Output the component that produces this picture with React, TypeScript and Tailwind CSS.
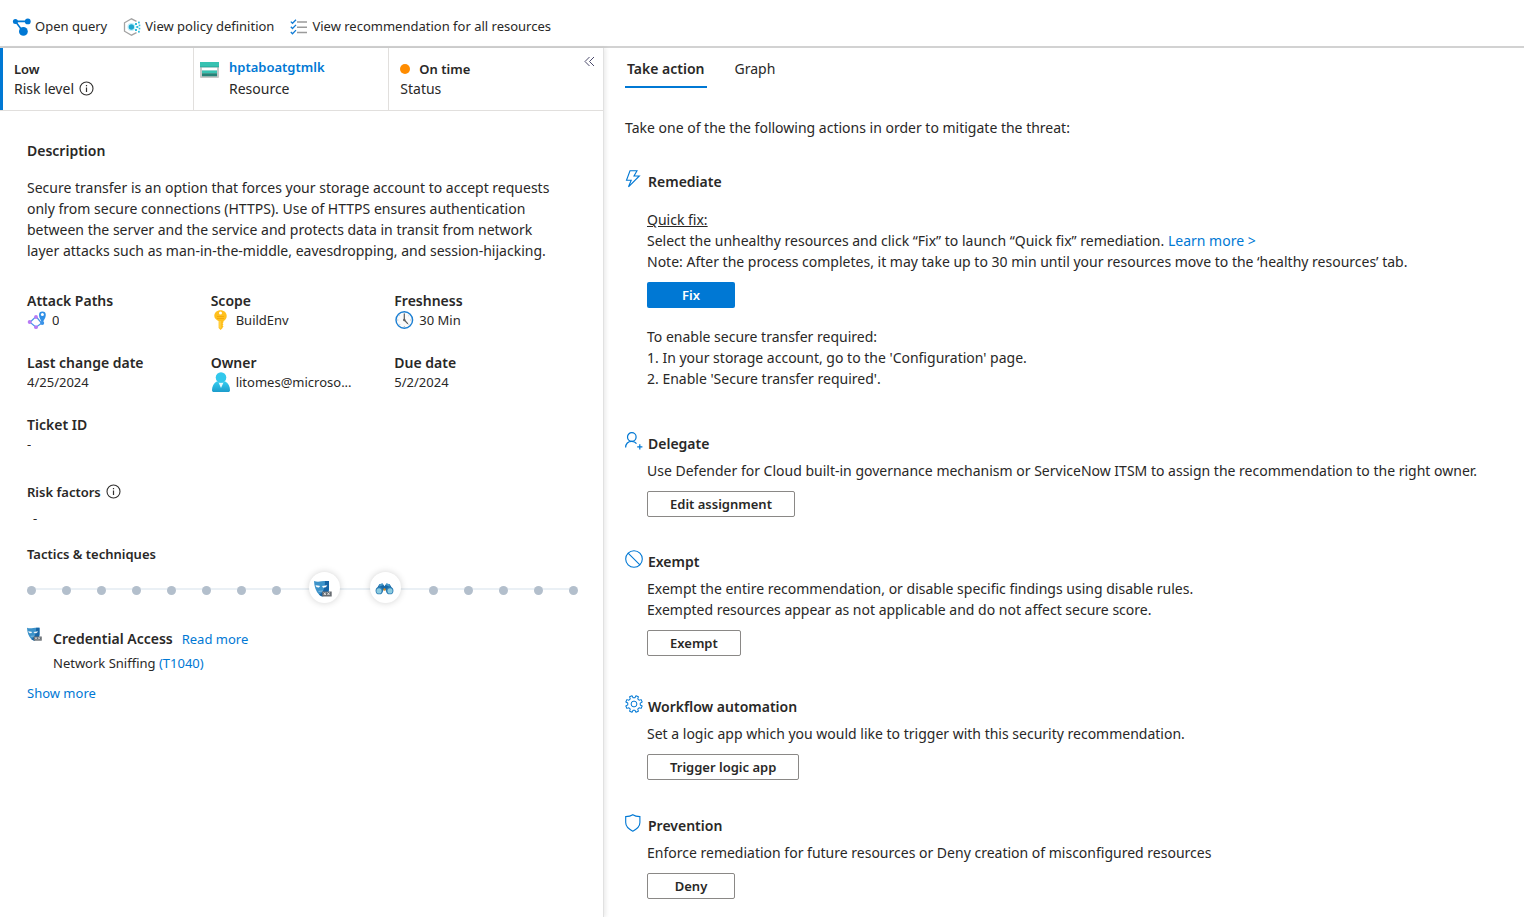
import type { ReactNode } from "react";

function QueryIcon() {
  return (
    <svg width="19" height="18" viewBox="0 0 19 18" aria-hidden="true" className="shrink-0">
      <path d="M3.500 3.400h12M3.500 3.400l7.500 10" stroke="#0078d4" strokeWidth="1.600" fill="none" />
      <circle cx="3.400" cy="3.400" r="2.500" fill="#0078d4" />
      <circle cx="15.800" cy="3.400" r="2.900" fill="#0078d4" />
      <circle cx="11.400" cy="13.400" r="4.400" fill="#0078d4" />
    </svg>
  );
}

function PolicyIcon() {
  return (
    <svg width="18" height="18" viewBox="0 0 18 18" aria-hidden="true" className="shrink-0">
      <path d="M13.500 3.300L8.500.8 1.500 4.800v8.400l7 4 5-2.500" stroke="#a3a3a3" strokeWidth="1.300" fill="none" />
      <circle cx="8.400" cy="9" r="4" fill="#c3f1fb" />
      <circle cx="8.400" cy="9" r="2.700" fill="#1fa8cf" />
      <g fill="#32bedd">
        <rect x="12" y="5" width="2" height="2" />
        <rect x="15" y="3.600" width="1.800" height="1.800" />
        <rect x="13.300" y="8" width="2" height="2" />
        <rect x="15.700" y="6.600" width="1.600" height="1.600" />
        <rect x="15.700" y="9.800" width="1.600" height="1.600" />
        <rect x="12" y="11" width="2" height="2" />
        <rect x="15" y="12.800" width="1.800" height="1.800" />
      </g>
    </svg>
  );
}

function ChecklistIcon() {
  return (
    <svg width="18" height="16" viewBox="0 0 18 16" aria-hidden="true" className="shrink-0">
      <path d="M7 3h10M7 8.200h10M7 13.400h10" stroke="#9b9b9b" strokeWidth="1.500" />
      <path d="M.8 2.600l1.700 1.700L6 .7M.8 7.800l1.700 1.700L6 5.900M.8 13l1.700 1.700L6 11.100" stroke="#0f7bd6" strokeWidth="1.300" fill="none" />
    </svg>
  );
}

function InfoIcon() {
  return (
    <svg width="15" height="15" viewBox="0 0 15 15" aria-hidden="true" className="-mt-[2px] shrink-0">
      <circle cx="7.500" cy="7.500" r="6.500" stroke="#323130" strokeWidth="1.100" fill="none" />
      <path d="M7.500 6.500v4.500M7.500 4v1.300" stroke="#323130" strokeWidth="1.200" />
    </svg>
  );
}

function StorageIcon() {
  return (
    <svg width="19" height="16" viewBox="0 0 19 16" aria-hidden="true" className="mt-[5px] shrink-0">
      <rect y="0" width="19" height="16" rx="1" fill="#c8c8c8" />
      <rect width="19" height="5" fill="#37c2b1" />
      <rect x="2" y="5.500" width="15" height="3" fill="#fff" />
      <rect x="2" y="8.500" width="15" height="2.800" fill="#37c2b1" />
      <rect x="2" y="11.300" width="15" height="3" fill="#258277" />
      <rect y="4.400" width="19" height=".9" fill="#2aa79a" />
    </svg>
  );
}

function AttackPathIcon() {
  return (
    <svg width="20" height="20" viewBox="0 0 20 20" aria-hidden="true" className="shrink-0">
      <path d="M9 6.500L3 12.300l6 5 5.500-4M9 6.500l5.500 6.500" stroke="#4a96e8" strokeWidth="1.200" fill="none" />
      <path d="M15.300 13.500c-1-3-3.300-5.300-3.300-8.500a3.400 3.400 0 016.800 0c0 3.200-2.500 5.500-3.500 8.500z" fill="#2f8fe6" />
      <circle cx="15.400" cy="4.600" r="1.500" fill="#fff" />
      <circle cx="15.200" cy="13" r="2" fill="#3b93e8" />
      <circle cx="9" cy="7" r="1.900" fill="#b77af4" />
      <circle cx="2.700" cy="12" r="2" fill="#b77af4" />
      <circle cx="9" cy="17.200" r="1.900" fill="#b77af4" />
    </svg>
  );
}

function KeyIcon() {
  return (
    <svg width="20" height="20" viewBox="0 0 20 20" aria-hidden="true" className="shrink-0">
      <path fillRule="evenodd" fill="#ffc01e" d="M9.500.2c3.600 0 6.200 2.400 6.200 5.700 0 2.300-1.300 4.100-3.200 5v1.300l-.9 1 .9 1-.9 1.100.9 1.100-.9 1V18l-2 1.900-2-1.900v-7.100C5.700 10 3.300 8.200 3.300 5.900 3.300 2.600 5.900.2 9.500.2zm0 1.300a1.500 1.500 0 100 3 1.500 1.500 0 000-3z" />
      <path fill="#f0a30a" d="M6 6.200h7v.9H6zM6 7.900h7v.8H6z" />
      <path fill="#ffdc5c" d="M8.500 11h1v7.500l-1-.9z" />
    </svg>
  );
}

function PersonIcon() {
  return (
    <svg width="20" height="20" viewBox="0 0 20 20" aria-hidden="true" className="shrink-0">
      <defs>
        <linearGradient id="person" x1="0" y1="0" x2="0" y2="1">
          <stop offset="0" stopColor="#35cdf0" />
          <stop offset="1" stopColor="#1c9ccb" />
        </linearGradient>
      </defs>
      <path fill="url(#person)" d="M5.600 9.500h8.800c2.800 1.500 4.600 5 4.600 8.700 0 1-.7 1.800-1.800 1.800H2.800C1.700 20 1 19.200 1 18.200 1 14.500 2.800 11 5.600 9.500z" />
      <path fill="#e8f9fd" d="M7.500 10.500L10 16l2.500-5.500z" />
      <circle cx="10" cy="5.500" r="5.300" fill="#32c8ec" />
    </svg>
  );
}

function ClockIcon() {
  return (
    <svg width="20" height="20" viewBox="0 0 20 20" aria-hidden="true" className="shrink-0">
      <circle cx="10.300" cy="10" r="8.300" fill="#fafafa" stroke="#1b7fd3" strokeWidth="1.400" />
      <path d="M10.300 3v1M10.300 16v1M3.300 10h1M16.300 10h1M5.300 5l.7.7M14.600 14.300l.7.700M5.300 15l.7-.7M14.600 5.700l.7-.7" stroke="#a8a8a8" strokeWidth=".9" />
      <path d="M10.300 3.800V10l3.600 3.800" stroke="#5c5c5c" strokeWidth="1.200" fill="none" />
      <circle cx="10.300" cy="10" r="1.200" fill="#5c5c5c" />
    </svg>
  );
}

function MaskIcon({ small = false }: { small?: boolean }) {
  return (
    <svg width={small ? 15 : 18} height={small ? 14 : 17} viewBox="0 0 18 16" aria-hidden="true" className="shrink-0">
      <path d="M0 .5c2.500.8 4.500.8 7.500.3 3-.5 5-.5 7.500-.3v8c0 3-2 5.500-5.500 7-1.500.7-3 0-4.500-1.500C2 11 .2 6 0 .5z" fill="#3c92c9" />
      <path d="M15 .5v8c0 3-2 5.500-5.500 7-1.500.7-3 0-4.500-1.500C9 12 11 8 11 .4z" fill="#1764a5" />
      <path d="M1.800 5l4 .6-.8 1.200-2.500-.4zM8.200 5.800l4.600-.9-.9 1.600-2.900.4zM4.500 10.800l4.500-.3" fill="#fff" stroke="#fff" strokeWidth=".4" />
      <rect x="8.200" y="11" width="9.500" height="5" fill="#686d72" />
      <path d="M9.800 12l2 2.500M11.800 12l-2 2.500M13.500 12l2 2.500M15.500 12l-2 2.500" stroke="#eee" strokeWidth=".9" />
    </svg>
  );
}

function BinocularsIcon() {
  return (
    <svg width="19" height="12" viewBox="0 0 20 12" aria-hidden="true" className="shrink-0">
      <path d="M4.500 1L8 .2l2 3 2-3 3.500.8 3.500 6-6 3.500-2-3.500H9l-2 3.500L1 7z" fill="#1768a6" />
      <path d="M4.500 1L8 .2l.6 1.600-4 1.700zM15.500 1L12 .2l-.6 1.600 4 1.700z" fill="#4a9bcb" />
      <circle cx="4.400" cy="7.800" r="3.800" fill="#2a7bb3" />
      <circle cx="15.600" cy="7.800" r="3.800" fill="#2a7bb3" />
      <circle cx="4.200" cy="8" r="2.700" fill="#8ccbe0" />
      <circle cx="15.800" cy="8" r="2.700" fill="#8ccbe0" />
      <circle cx="10" cy="6.600" r="1.300" fill="#d98a1f" />
    </svg>
  );
}

function BoltIcon() {
  return (
    <svg width="16" height="18" viewBox="0 0 16 18" aria-hidden="true" fill="none" stroke="#0078d4" strokeWidth="1.100">
      <path d="M5 .8h7L9 6h5.300L3.500 16.800 6.200 10.200H1.500z" />
    </svg>
  );
}

function DelegateIcon() {
  return (
    <svg width="18" height="18" viewBox="0 0 18 18" aria-hidden="true" fill="none" stroke="#0078d4" strokeWidth="1.200">
      <circle cx="6.800" cy="5" r="4.300" />
      <path d="M.6 15.500C.8 11.600 3.400 9.300 6.800 9.300c2 0 3.700.8 4.700 2.300M14.800 12.200v5.200M12.200 14.800h5.200" />
    </svg>
  );
}

function BlockedIcon() {
  return (
    <svg width="18" height="18" viewBox="0 0 18 18" aria-hidden="true" fill="none" stroke="#0078d4" strokeWidth="1.100">
      <circle cx="9" cy="9" r="8.300" />
      <path d="M3.100 3.100l11.800 11.800" />
    </svg>
  );
}

function GearIcon() {
  const teeth = Array.from({ length: 8 }, (_, i) => {
    const point = (radius: number, degrees: number) => {
      const a = ((degrees + i * 45) * Math.PI) / 180;
      return `${(9 + radius * Math.cos(a)).toFixed(2)} ${(9 + radius * Math.sin(a)).toFixed(2)}`;
    };
    return `${i === 0 ? "M" : "L"}${point(8.4, -9)} L${point(8.4, 9)} L${point(6.3, 14)} L${point(6.3, 31)}`;
  }).join(" ");
  return (
    <svg width="18" height="18" viewBox="0 0 18 18" aria-hidden="true" fill="none" stroke="#0078d4" strokeWidth="1" strokeLinejoin="round">
      <path d={`${teeth}Z`} transform="rotate(22.500 9 9)" />
      <circle cx="9" cy="9" r="2.900" />
    </svg>
  );
}

function ShieldIcon() {
  return (
    <svg width="16" height="18" viewBox="0 0 16 18" aria-hidden="true" fill="none" stroke="#0078d4" strokeWidth="1.100">
      <path d="M7.800.7C6 2 3.500 2.600.7 2.600v6c0 4 3 6.600 7.100 8.600 4.100-2 7.100-4.600 7.100-8.600v-6C12 2.600 9.600 2 7.800.7z" />
    </svg>
  );
}

function ToolbarButton({ icon, children }: { icon: ReactNode; children: ReactNode }) {
  return (
    <button type="button" className="flex items-center gap-1 text-[13px]">
      {icon}
      {children}
    </button>
  );
}

function Field({ label, icon, children }: { label: string; icon?: ReactNode; children: ReactNode }) {
  return (
    <div className="min-w-0">
      <dt className="text-sm/5 font-semibold">{label}</dt>
      <dd className="flex h-5 items-center gap-[5px] text-[13px]">
        {icon && <span className="-mt-[2px] shrink-0">{icon}</span>}
        <span className="truncate">{children}</span>
      </dd>
    </div>
  );
}

function TacticsTimeline() {
  const dots = (count: number) =>
    Array.from({ length: count }, (_, i) => <li key={`${count}-${i}`} className="mt-[6px] size-[9px] rounded-full bg-[#b3bfcc]" />);
  const bubble = (icon: ReactNode) => (
    <li className="mx-[2px] flex size-[31px] items-center justify-center rounded-full bg-white pt-[2px] pr-[3px] shadow-[0_0_7px_rgba(0,0,0,0.18)]">{icon}</li>
  );
  return (
    <div className="relative mt-2">
      <div className="absolute inset-x-1 top-4 h-[2px] bg-[#eaf0f5]" />
      <ul className="relative flex items-center justify-between">
        {dots(8)}
        {bubble(<MaskIcon />)}
        {bubble(<BinocularsIcon />)}
        {dots(5)}
      </ul>
    </div>
  );
}

function ActionButton({ primary = false, children }: { primary?: boolean; children: ReactNode }) {
  return (
    <button
      type="button"
      className={
        primary
          ? "mt-[10px] h-[26px] min-w-[88px] rounded-[2px] bg-[#0078d4] px-[22px] text-[13px] font-semibold text-white"
          : "mt-[10px] h-[26px] min-w-[88px] rounded-[2px] border border-[#8a8886] bg-white px-[22px] text-[13px] font-semibold"
      }
    >
      {children}
    </button>
  );
}

function Action({ title, icon, children }: { title: string; icon: ReactNode; children: ReactNode }) {
  return (
    <section className="text-sm/[21px]">
      <h2 className="flex font-semibold">
        <span className="-mt-[6px] flex w-[23px] shrink-0 items-center">{icon}</span>
        {title}
      </h2>
      <div className="ml-[22px]">{children}</div>
    </section>
  );
}

export default function App() {
  return (
    <div className="flex min-h-screen flex-col bg-white font-['Segoe_UI','Noto_Sans','Open_Sans',sans-serif] text-[#292827]">
      <header className="flex h-12 items-center gap-4 border-b-2 border-[#d2d2d2] px-3 pt-2">
        <ToolbarButton icon={<QueryIcon />}>Open query</ToolbarButton>
        <ToolbarButton icon={<PolicyIcon />}>View policy definition</ToolbarButton>
        <ToolbarButton icon={<ChecklistIcon />}>View recommendation for all resources</ToolbarButton>
      </header>

      <div className="grid grow grid-cols-[minmax(0,604fr)_minmax(0,920fr)]">
        <aside className="border-r border-[#e1e1e1] shadow-[2px_0_4px_rgba(0,0,0,0.08)]">
          <div className="flex h-[63px] border-b border-[#e1dfdd] text-sm/5">
            <div className="w-[32%] border-l-[3px] border-[#0078d4] pt-[11px] pl-[11px]">
              <p className="text-[13px]/5 font-semibold">Low</p>
              <p className="flex items-center gap-[5px]">
                Risk level <InfoIcon />
              </p>
            </div>
            <div className="flex w-[32.400%] gap-[10px] border-l border-[#e1dfdd] pt-[9px] pl-[6px]">
              <StorageIcon />
              <div>
                <a href="#resource" className="block text-[13px]/5 font-semibold text-[#0078d4]">
                  hptaboatgtmlk
                </a>
                <p className="mt-[2px]">Resource</p>
              </div>
            </div>
            <div className="grow border-l border-[#e1dfdd] pt-[11px] pl-[11px]">
              <p className="flex items-center gap-[9px] text-[13px]/5 font-semibold">
                <span className="size-[10px] rounded-full bg-[#ff8c00]" />
                On time
              </p>
              <p>Status</p>
            </div>
            <button type="button" aria-label="Collapse panel" className="mr-2 h-[26px] pl-2">
              <svg width="11" height="11" viewBox="0 0 11 11" aria-hidden="true" fill="none" stroke="#4b4a6b">
                <path d="M5.500 1L1 5.500 5.500 10M10 1L5.500 5.500 10 10" />
              </svg>
            </button>
          </div>

          <div className="pt-[30px] pr-[25px] pl-[27px]">
            <h2 className="text-sm/5 font-semibold">Description</h2>
            <p className="mt-4 pr-3 text-sm/[21px]">
              Secure transfer is an option that forces your storage account to accept requests only from secure connections (HTTPS). Use of HTTPS ensures authentication between the server and the service and protects data in transit from network layer attacks such as man-in-the-middle, eavesdropping, and session-hijacking.
            </p>

            <dl className="mt-[30px] grid grid-cols-3 gap-y-[22px]">
              <Field label="Attack Paths" icon={<AttackPathIcon />}>0</Field>
              <Field label="Scope" icon={<KeyIcon />}>BuildEnv</Field>
              <Field label="Freshness" icon={<ClockIcon />}>30 Min</Field>
              <Field label="Last change date">4/25/2024</Field>
              <Field label="Owner" icon={<PersonIcon />}>litomes@microso...</Field>
              <Field label="Due date">5/2/2024</Field>
              <Field label="Ticket ID">-</Field>
            </dl>

            <h2 className="mt-[27px] flex items-center gap-[5px] text-[13px]/5 font-semibold">
              Risk factors <InfoIcon />
            </h2>
            <p className="mt-[6px] ml-[6px] text-[13px]/5">-</p>

            <h2 className="mt-4 text-[13px]/5 font-semibold">Tactics &amp; techniques</h2>
            <TacticsTimeline />

            <div className="mt-6 flex">
              <div className="w-[26px] shrink-0">
                <MaskIcon small />
              </div>
              <div>
                <p className="mt-[2px] flex items-baseline gap-[9px]">
                  <span className="text-sm/5 font-semibold">Credential Access</span>
                  <a href="#credential-access" className="text-[13px]/5 text-[#0078d4]">Read more</a>
                </p>
                <p className="mt-1 text-[13px]/5">
                  Network Sniffing <a href="#t1040" className="text-[#0078d4]">(T1040)</a>
                </p>
              </div>
            </div>
            <button type="button" className="mt-[10px] block text-[13px]/5 text-[#0078d4]">Show more</button>
          </div>
        </aside>

        <main className="pt-[11px] pr-3 pb-4 pl-[21px]">
          <div role="tablist" className="flex gap-[26px] text-sm/5">
            <button type="button" role="tab" aria-selected="true" className="border-b-2 border-[#0078d4] px-[2px] pb-[7px] font-semibold">
              Take action
            </button>
            <button type="button" role="tab" aria-selected="false" className="px-[2px] pb-[9px]">
              Graph
            </button>
          </div>
          <p className="mt-[29px] text-sm/[21px]">Take one of the the following actions in order to mitigate the threat:</p>

          <div className="mt-[33px]">
            <Action title="Remediate" icon={<BoltIcon />}>
              <p className="mt-[17px] underline">Quick fix:</p>
              <p>
                Select the unhealthy resources and click “Fix” to launch “Quick fix” remediation.{" "}
                <a href="#learn-more" className="text-[#0078d4]">Learn more &gt;</a>
              </p>
              <p>Note: After the process completes, it may take up to 30 min until your resources move to the ‘healthy resources’ tab.</p>
              <ActionButton primary>Fix</ActionButton>
              <p className="mt-[18px]">To enable secure transfer required:</p>
              <p>1. In your storage account, go to the 'Configuration' page.</p>
              <p>2. Enable 'Secure transfer required'.</p>
            </Action>
          </div>

          <div className="mt-11">
            <Action title="Delegate" icon={<DelegateIcon />}>
              <p className="mt-[6px]">
                Use Defender for Cloud built-in governance mechanism or ServiceNow ITSM to assign the recommendation to the right owner.
              </p>
              <ActionButton>Edit assignment</ActionButton>
            </Action>
          </div>

          <div className="mt-[34px]">
            <Action title="Exempt" icon={<BlockedIcon />}>
              <p className="mt-[6px]">Exempt the entire recommendation, or disable specific findings using disable rules.</p>
              <p>Exempted resources appear as not applicable and do not affect secure score.</p>
              <ActionButton>Exempt</ActionButton>
            </Action>
          </div>

          <div className="mt-10">
            <Action title="Workflow automation" icon={<GearIcon />}>
              <p className="mt-[6px]">Set a logic app which you would like to trigger with this security recommendation.</p>
              <ActionButton>Trigger logic app</ActionButton>
            </Action>
          </div>

          <div className="mt-[35px]">
            <Action title="Prevention" icon={<ShieldIcon />}>
              <p className="mt-[6px]">Enforce remediation for future resources or Deny creation of misconfigured resources</p>
              <ActionButton>Deny</ActionButton>
            </Action>
          </div>
        </main>
      </div>
    </div>
  );
}
